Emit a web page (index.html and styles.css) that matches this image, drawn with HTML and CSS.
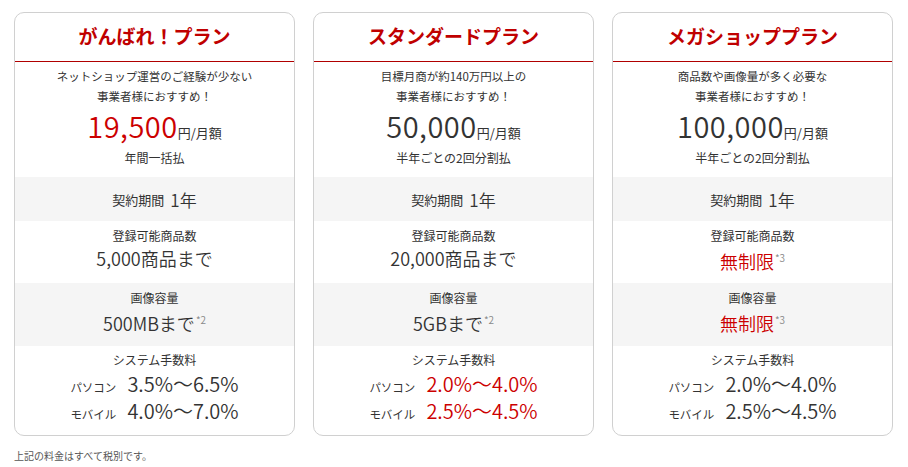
FILE: index.html
```html
<!DOCTYPE html>
<html lang="ja">
<head>
<meta charset="utf-8">
<link rel="stylesheet" href="styles.css">
</head>
<body>
<div class="plans">
  <div class="card">
    <h2 class="title">がんばれ！プラン</h2>
    <div class="intro">
      <p class="lead">ネットショップ運営のご経験が少ない<br>事業者様におすすめ！</p>
      <p class="price red"><span class="num">19,500</span><span class="unit">円/月額</span></p>
      <p class="pay">年間一括払</p>
    </div>
    <div class="row gray term"><span class="lbl">契約期間</span><span class="big">1年</span></div>
    <div class="row item"><p class="lbl">登録可能商品数</p><p class="val">5,000商品まで</p></div>
    <div class="row gray item"><p class="lbl">画像容量</p><p class="val">500MBまで<sup>*2</sup></p></div>
    <div class="row fee">
      <p class="lbl">システム手数料</p>
      <p class="line"><span class="dev">パソコン</span><span class="pct">3.5%～6.5%</span></p>
      <p class="line"><span class="dev">モバイル</span><span class="pct">4.0%～7.0%</span></p>
    </div>
  </div>
  <div class="card">
    <h2 class="title">スタンダードプラン</h2>
    <div class="intro">
      <p class="lead">目標月商が約140万円以上の<br>事業者様におすすめ！</p>
      <p class="price"><span class="num">50,000</span><span class="unit">円/月額</span></p>
      <p class="pay">半年ごとの2回分割払</p>
    </div>
    <div class="row gray term"><span class="lbl">契約期間</span><span class="big">1年</span></div>
    <div class="row item"><p class="lbl">登録可能商品数</p><p class="val">20,000商品まで</p></div>
    <div class="row gray item"><p class="lbl">画像容量</p><p class="val">5GBまで<sup>*2</sup></p></div>
    <div class="row fee">
      <p class="lbl">システム手数料</p>
      <p class="line"><span class="dev">パソコン</span><span class="pct red">2.0%～4.0%</span></p>
      <p class="line"><span class="dev">モバイル</span><span class="pct red">2.5%～4.5%</span></p>
    </div>
  </div>
  <div class="card">
    <h2 class="title">メガショッププラン</h2>
    <div class="intro">
      <p class="lead">商品数や画像量が多く必要な<br>事業者様におすすめ！</p>
      <p class="price"><span class="num">100,000</span><span class="unit">円/月額</span></p>
      <p class="pay">半年ごとの2回分割払</p>
    </div>
    <div class="row gray term"><span class="lbl">契約期間</span><span class="big">1年</span></div>
    <div class="row item"><p class="lbl">登録可能商品数</p><p class="val red">無制限<sup>*3</sup></p></div>
    <div class="row gray item"><p class="lbl">画像容量</p><p class="val red">無制限<sup>*3</sup></p></div>
    <div class="row fee">
      <p class="lbl">システム手数料</p>
      <p class="line"><span class="dev">パソコン</span><span class="pct">2.0%～4.0%</span></p>
      <p class="line"><span class="dev">モバイル</span><span class="pct">2.5%～4.5%</span></p>
    </div>
  </div>
</div>
<p class="note">上記の料金はすべて税別です。</p>
</body>
</html>
```
FILE: styles.css
```css
* { box-sizing: border-box; margin: 0; padding: 0; }
body {
  margin: 0;
  padding: 12px 15px 0 14px;
  background: #fff;
  color: #333;
  font-family: "Noto Sans CJK JP", "Noto Sans", sans-serif;
}
.plans {
  display: flex;
  gap: 18px;
}
.card {
  width: 281px;
  height: 424px;
  border: 1px solid #d0d0d0;
  border-radius: 10px;
  overflow: hidden;
  display: flex;
  flex-direction: column;
}
.title {
  height: 49px;
  border-bottom: 1px solid #b00000;
  color: #c00000;
  font-size: 19px;
  font-weight: bold;
  text-align: center;
  line-height: 46px;
}
.red { color: #cc0000; }
.intro {
  height: 115px;
  text-align: center;
  padding-top: 4px;
}
.lead {
  font-size: 11.5px;
  line-height: 20px;
}
.price {
  margin-top: 2px;
  line-height: 34px;
  height: 34px;
}
.price .num {
  font-size: 29px;
  font-weight: 350;
  letter-spacing: 0.5px;
}
.price .unit {
  font-size: 13px;
  color: #333;
}
.pay {
  font-size: 12px;
  line-height: 22px;
  margin-top: 5px;
}
.row {
  text-align: center;
}
.gray { background: #f5f5f5; }
.term {
  height: 44px;
  display: flex;
  align-items: center;
  justify-content: center;
  gap: 6px;
}
.term .lbl { font-size: 13px; }
.term .big { font-size: 17px; font-weight: 350; }
.item {
  height: 62px;
  padding-top: 5px;
}
.item + .item { height: 63px; }
.item .lbl {
  font-size: 12px;
  line-height: 20px;
}
.item .val {
  font-size: 18px;
  line-height: 24px;
  font-weight: 350;
}
sup {
  font-size: 10px;
  color: #888;
  vertical-align: 7px;
  margin-left: 1px;
}
.fee {
  flex: 1;
  padding-top: 4px;
}
.fee .lbl {
  font-size: 12px;
  line-height: 20px;
}
.line {
  display: flex;
  justify-content: center;
  align-items: baseline;
  height: 27px;
  line-height: 27px;
}
.dev {
  font-size: 11.5px;
  margin-right: 11px;
}
.pct {
  font-size: 20px;
  font-weight: 350;
}
.note {
  margin-top: 12px;
  font-size: 10px;
  color: #555;
}
```
